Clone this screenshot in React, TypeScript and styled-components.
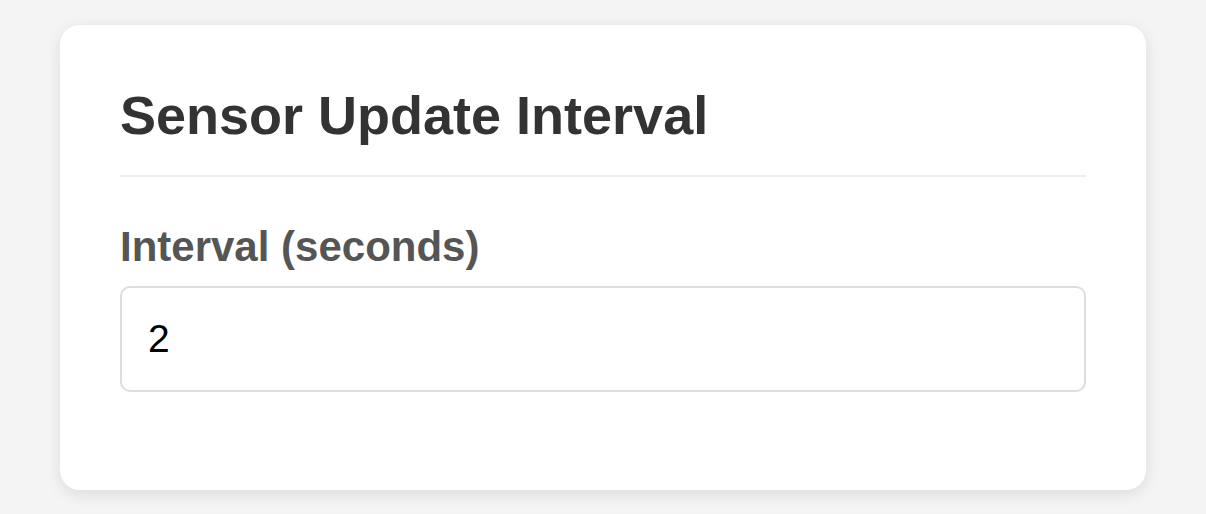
import styled, { createGlobalStyle } from "styled-components";

const GlobalStyle = createGlobalStyle`
  html, body {
    margin: 0;
    padding: 0;
    background: #f4f4f4;
    font-family: "Liberation Sans", Arial, sans-serif;
  }
  * {
    box-sizing: border-box;
  }
`;

const S = {
  page: styled.div`
    padding: 25px 60px;
  `,
  card: styled.section`
    background: #ffffff;
    border-radius: 20px;
    box-shadow: 0 4px 16px rgba(0, 0, 0, 0.1);
    padding: 59px 60px 98px;
  `,
  title: styled.h2`
    margin: 0;
    font-size: 54px;
    line-height: 62px;
    font-weight: bold;
    color: #333333;
    padding-bottom: 29px;
    border-bottom: 2px solid #eeeeee;
  `,
  group: styled.div`
    margin-top: 46px;
    display: flex;
    flex-direction: column;
    gap: 15px;
  `,
  label: styled.label`
    font-size: 42px;
    line-height: 48px;
    font-weight: bold;
    color: #555555;
  `,
  input: styled.input`
    height: 106px;
    width: 100%;
    padding: 0 26px;
    border: 2px solid #dddddd;
    border-radius: 10px;
    font-family: "Liberation Sans", Arial, sans-serif;
    font-size: 39px;
    color: #000000;
    background: #ffffff;
    outline: none;
  `,
};

function App() {
  return (
    <>
      <GlobalStyle />
      <S.page>
        <S.card>
          <S.title>Sensor Update Interval</S.title>
          <S.group>
            <S.label htmlFor="interval">Interval (seconds)</S.label>
            <S.input id="interval" type="text" defaultValue="2" />
          </S.group>
        </S.card>
      </S.page>
    </>
  );
}

export default App;
